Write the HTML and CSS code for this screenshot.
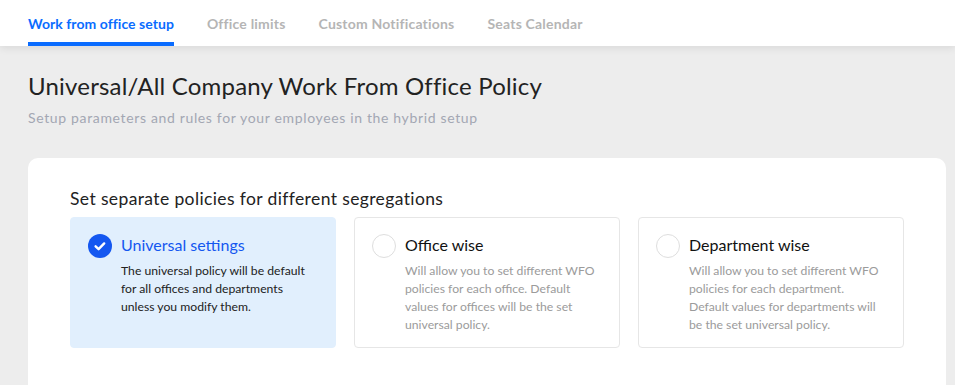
FILE: index.html
```html
<!DOCTYPE html>
<html lang="en">
<head>
  <meta charset="UTF-8" />
  <title>Work from office setup</title>
  <link rel="stylesheet" href="styles.css">
</head>
<body>
  <header class="tabs">
    <div class="tab active">Work from office setup</div>
    <div class="tab">Office limits</div>
    <div class="tab">Custom Notifications</div>
    <div class="tab">Seats Calendar</div>
  </header>
  <main class="page">
    <h1>Universal/All Company Work From Office Policy</h1>
    <p class="subtitle">Setup parameters and rules for your employees in the hybrid setup</p>
    <section class="card">
      <h2>Set separate policies for different segregations</h2>
      <div class="options">
        <div class="option selected">
          <span class="radio">
            <svg width="24" height="24" viewBox="0 0 24 24"><circle cx="12" cy="12" r="12" fill="#1457f0"/><path d="M7.6 12.3l3 2.9 5.6-5.8" fill="none" stroke="#fff" stroke-width="2.4" stroke-linecap="round" stroke-linejoin="round"/></svg>
          </span>
          <div class="option-body">
            <div class="option-title">Universal settings</div>
            <p>The universal policy will be default for all offices and departments unless you modify them.</p>
          </div>
        </div>
        <div class="option">
          <span class="radio empty"></span>
          <div class="option-body">
            <div class="option-title">Office wise</div>
            <p>Will allow you to set different WFO policies for each office. Default values for offices will be the set universal policy.</p>
          </div>
        </div>
        <div class="option">
          <span class="radio empty"></span>
          <div class="option-body">
            <div class="option-title">Department wise</div>
            <p>Will allow you to set different WFO policies for each department. Default values for departments will be the set universal policy.</p>
          </div>
        </div>
      </div>
    </section>
  </main>
</body>
</html>
```

FILE: styles.css
```css
body {
  margin: 0;
  background: #ededed;
  font-family: 'Lato', 'Noto Sans', sans-serif;
  color: #222;
  overflow: hidden;
}
.tabs {
  display: flex;
  gap: 33px;
  height: 46px;
  padding-left: 28px;
  background: #fff;
  box-shadow: 0 2px 8px rgba(0, 0, 0, 0.09);
  position: relative;
}
.tab {
  font-size: 14px;
  font-weight: 700;
  letter-spacing: 0.2px;
  color: #b5b5b5;
  line-height: 47px;
  height: 46px;
  box-sizing: border-box;
}
.tab.active {
  color: #0a6cff;
  letter-spacing: 0.05px;
  border-bottom: 4px solid #0a6cff;
}
.page {
  padding: 0 9px 0 28px;
}
h1 {
  margin: 24px 0 0;
  font-size: 24px;
  line-height: 32px;
  font-weight: 400;
  letter-spacing: 0.2px;
  color: #222;
}
.subtitle {
  margin: 7px 0 0;
  font-size: 14px;
  line-height: 18px;
  letter-spacing: 0.65px;
  color: #a3a7b3;
}
.card {
  margin-top: 31px;
  background: #fff;
  border-radius: 10px;
  padding: 29px 43px 40px 42px;
  height: 300px;
}
h2 {
  margin: 0;
  font-size: 17.5px;
  line-height: 24px;
  font-weight: 400;
  letter-spacing: 0.38px;
  color: #222;
}
.options {
  display: grid;
  grid-template-columns: repeat(3, 266px);
  gap: 18px;
  margin-top: 6px;
}
.option {
  display: flex;
  gap: 9px;
  height: 131px;
  box-sizing: border-box;
  padding: 15px 17px 15px;
  border: 1px solid #e6e6e6;
  border-radius: 4px;
}
.option.selected {
  background: #e1effd;
  border-color: #e1effd;
}
.radio {
  flex: none;
  width: 24px;
  height: 24px;
  margin-top: 1px;
  box-sizing: border-box;
  border-radius: 50%;
}
.radio svg {
  display: block;
}
.radio.empty {
  border: 1px solid #dedede;
}
.option-title {
  font-size: 16px;
  line-height: 24px;
  color: #111;
}
.selected .option-title {
  color: #1457f0;
}
.option-body p {
  margin: 5px 0 0;
  font-size: 12.2px;
  line-height: 18px;
  color: #9b9b9b;
}
.selected .option-body p {
  color: #222;
}
```
